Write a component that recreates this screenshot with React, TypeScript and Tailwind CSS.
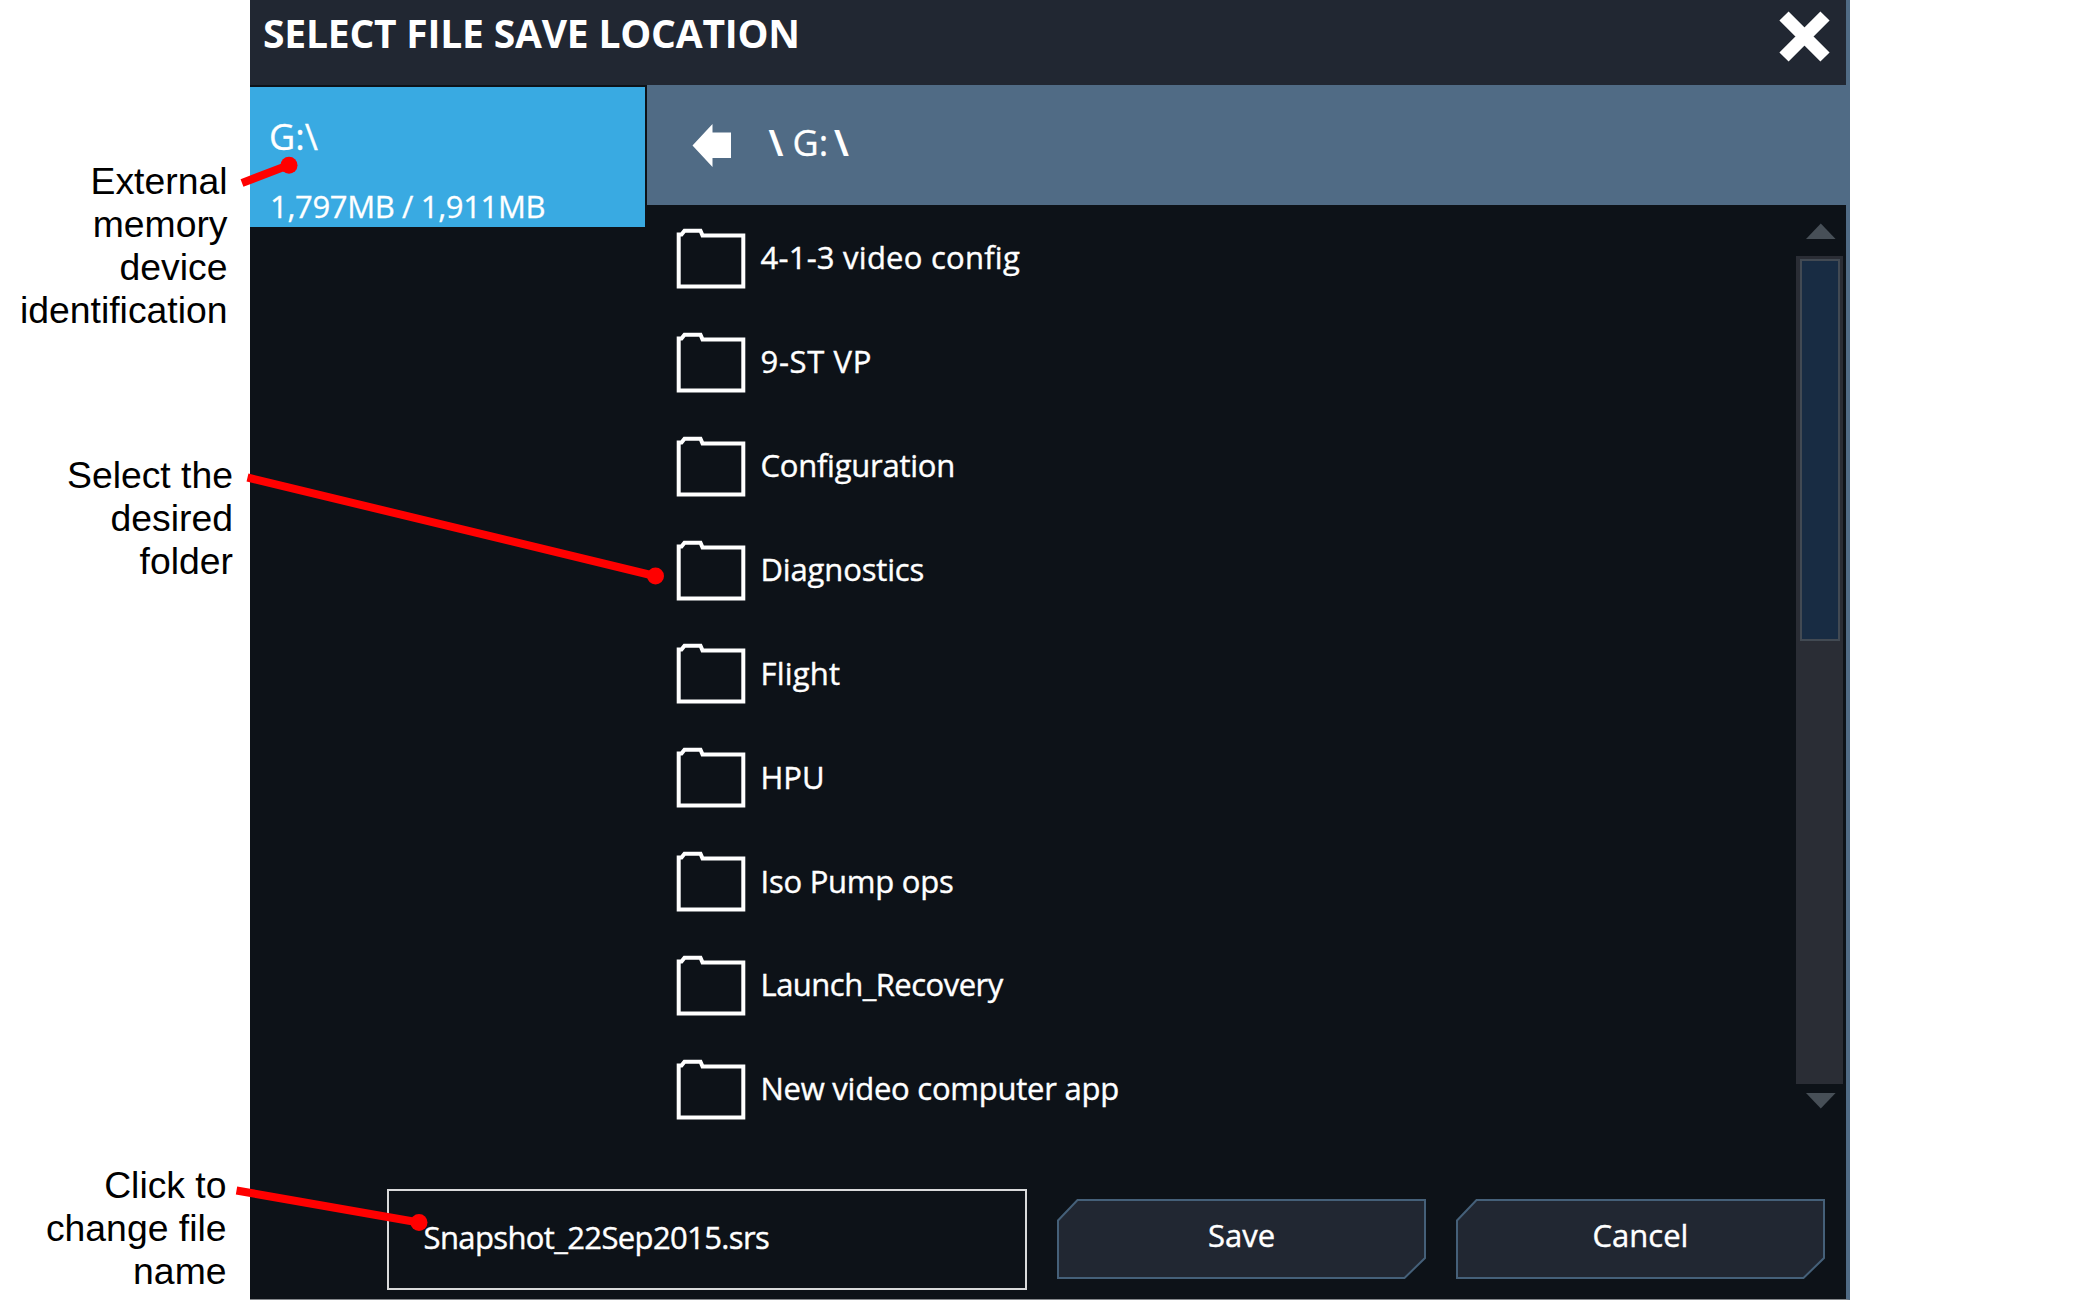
type Folder = { name: string; tracking: string };

const folders: Folder[] = [
  { name: '4-1-3 video config', tracking: 'tracking-[0.24px]' },
  { name: '9-ST VP', tracking: 'tracking-[0.65px]' },
  { name: 'Configuration', tracking: 'tracking-[-0.25px]' },
  { name: 'Diagnostics', tracking: 'tracking-[-0.15px]' },
  { name: 'Flight', tracking: 'tracking-[0.2px]' },
  { name: 'HPU', tracking: 'tracking-[0px]' },
  { name: 'Iso Pump ops', tracking: 'tracking-[-0.25px]' },
  { name: 'Launch_Recovery', tracking: 'tracking-[-0.52px]' },
  { name: 'New video computer app', tracking: 'tracking-[-0.24px]' },
];

function FolderIcon() {
  return (
    <svg className="mt-1 shrink-0" width="70" height="62" viewBox="0 0 70 62" fill="none" stroke="#fff" strokeWidth="4">
      <path d="M2.7 6.6 H5.5 L8.5 2.8 H24.5 L26.5 7.4 H67.3 V58.6 H2.7 Z" />
    </svg>
  );
}

function CutButton({ label }: { label: string }) {
  return (
    <button className="relative flex h-[82px] w-[370px] items-center justify-center pb-2 text-[31px] leading-[40px]">
      <svg className="absolute inset-0" width="370" height="82" viewBox="0 0 370 82">
        <path d="M2 22.5 L21.5 2 H369 V60 L348.500 80 H2 Z" fill="#212732" stroke="#456079" strokeWidth="2" />
      </svg>
      <span className="relative pl-px [-webkit-text-stroke:0.4px_white]">{label}</span>
    </button>
  );
}

function Callout({ lines, className }: { lines: string[]; className: string }) {
  return (
    <div className={className}>
      {lines.map((l) => (
        <div key={l}>{l}</div>
      ))}
    </div>
  );
}

export default function App() {
  return (
    <div className="relative flex h-[1300px] w-[2100px] overflow-hidden bg-white">
      <aside className="flex w-[250px] shrink-0 flex-col whitespace-nowrap pt-[160px] text-right font-['Liberation_Sans',sans-serif] text-[37.33px] leading-[43px] text-black">
        <Callout lines={['External', 'memory', 'device', 'identification']} className="mr-[22.5px] h-[294px]" />
        <Callout lines={['Select the', 'desired', 'folder']} className="mr-[17px] h-[710px]" />
        <Callout lines={['Click to', 'change file', 'name']} className="mr-[23.5px]" />
      </aside>

      <main className="flex h-[1300px] w-[1600px] flex-col border-r-4 border-b border-r-[#506b85] border-b-[#85888c] bg-[#0d1218] font-['Open_Sans','Noto_Sans',sans-serif] text-white">
        <header className="flex h-[85px] shrink-0 justify-between bg-[#212732] pl-[13px] pr-[16px]">
          <h1 className="pt-[6px] text-[39px] font-bold leading-[53px] tracking-[-0.2px]">SELECT FILE SAVE LOCATION</h1>
          <svg className="mt-[11px]" width="51" height="51" viewBox="0 0 51 51">
            <path d="M5 5 L46 46 M46 5 L5 46" stroke="#fff" strokeWidth="13" />
          </svg>
        </header>

        <div className="flex h-[1055px] shrink-0">
          <nav className="w-[397px] shrink-0 pt-[2px] pr-[2px]">
            <div className="flex h-[140px] flex-col bg-[#39aae2] pl-[19px] pt-[25px] [-webkit-text-stroke:0.3px_white]">
              <div className="text-[36px] leading-[49px]">G:\</div>
              <div className="pl-px pt-[24px] text-[31px] leading-[42px] tracking-[-0.35px]">1,797MB / 1,911MB</div>
            </div>
          </nav>

          <section className="flex min-w-0 flex-1 flex-col">
            <div className="-mr-1 flex h-[120px] shrink-0 items-center bg-[#506b85] pl-[45px]">
              <svg className="shrink-0" width="40" height="44" viewBox="0 0 40 44">
                <path d="M0.5 22.500 L20.5 1 V9.500 H39 V35 H20.5 V44 Z" fill="#fff" />
              </svg>
              <div className="flex pb-[5px] pl-[36.5px] text-[36px] leading-[49px]">
                <span className="w-[24px] font-bold">\</span>
                <span className="w-[41.5px] [-webkit-text-stroke:0.3px_white]">G:</span>
                <span className="font-bold">\</span>
              </div>
            </div>
            <div className="flex min-h-0 flex-1">
              <ul className="flex-1">
                {folders.map((f) => (
                  <li key={f.name} className="flex h-[103.86px] items-center pl-[29px]">
                    <FolderIcon />
                    <span className={`pl-[14.5px] pt-px text-[31px] leading-[42px] [-webkit-text-stroke:0.4px_white] ${f.tracking}`}>{f.name}</span>
                  </li>
                ))}
              </ul>
              <div className="flex w-[50px] flex-col pt-[18px]">
                <svg className="ml-[10px]" width="30" height="16" viewBox="0 0 30 16">
                  <path d="M0 16 L14.8 0.5 L29.6 16 Z" fill="#474f57" />
                </svg>
                <div className="mt-[17px] h-[828px] w-[47px] bg-[#2a2d35] pl-[4px] pt-[3px]">
                  <div className="h-[382px] w-[40px] border-2 border-[#424a53] bg-[#182c43]" />
                </div>
                <svg className="mt-[9px] ml-[10px]" width="30" height="16" viewBox="0 0 30 16">
                  <path d="M0 0 H29.6 L14.8 15.5 Z" fill="#474f57" />
                </svg>
              </div>
            </div>
          </section>
        </div>

        <footer className="flex flex-1 pl-[137px] pt-[49px]">
          <div className="flex h-[101px] w-[640px] shrink-0 border-2 border-[#d9dadb] pl-[34.5px] pt-[24.5px] text-[31px] leading-[42px] tracking-[-0.62px] [-webkit-text-stroke:0.4px_white]">
            Snapshot_22Sep2015.srs
          </div>
          <div className="flex gap-[29px] pl-[29px] pt-[9px]">
            <CutButton label="Save" />
            <CutButton label="Cancel" />
          </div>
        </footer>
      </main>

      <svg className="pointer-events-none absolute inset-0" width="2100" height="1300" stroke="#f00" strokeWidth="8" fill="#f00">
        <path d="M242 183 L289 165 M247.5 477.5 L655 576 M236.5 1190.5 L419 1222.5" />
        <g stroke="none">
          <circle cx="289" cy="165.3" r="8.5" />
          <circle cx="655.5" cy="576" r="8.5" />
          <circle cx="419" cy="1222.5" r="8.5" />
        </g>
      </svg>
    </div>
  );
}
